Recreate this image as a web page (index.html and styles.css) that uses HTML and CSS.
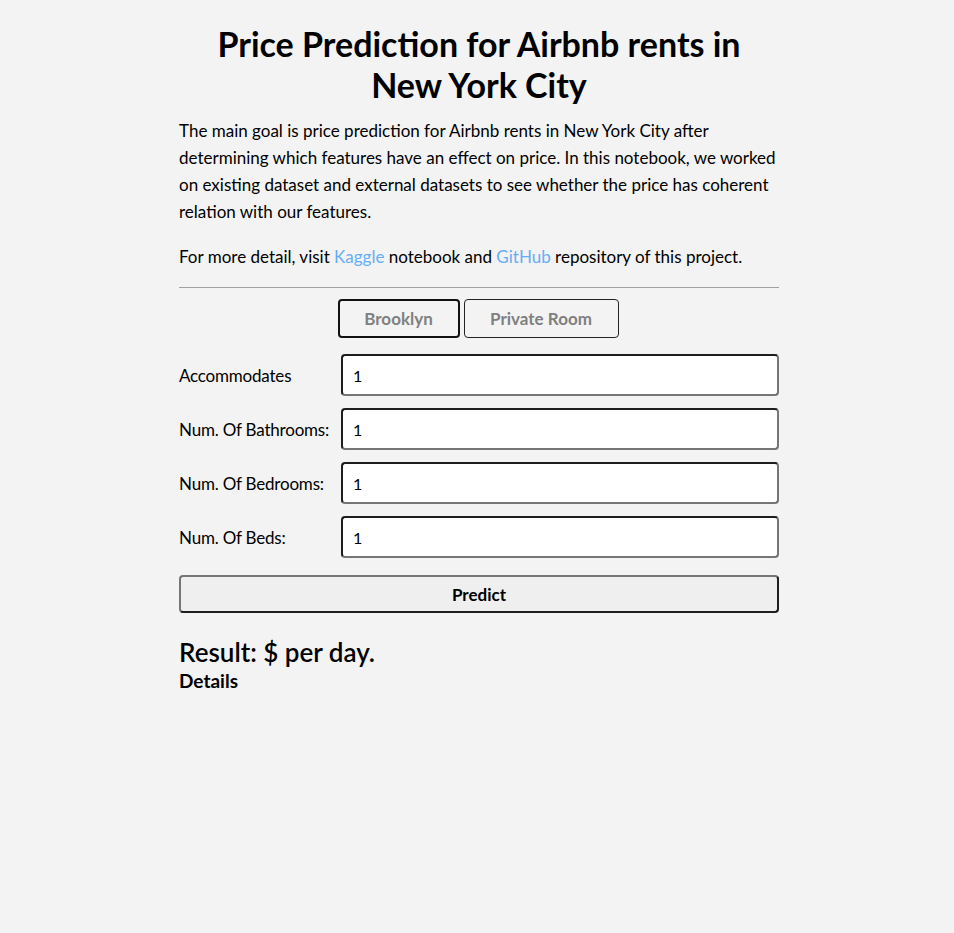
FILE: index.html
```html
<!DOCTYPE html>
<html lang="en">
<head>
<meta charset="utf-8">
<title>Price Prediction for Airbnb rents in New York City</title>
<link rel="stylesheet" href="styles.css">
</head>
<body>
<main class="page">
  <h1 class="title">Price Prediction for Airbnb rents in New York City</h1>
  <p class="text">The main goal is price prediction for Airbnb rents in New York City after determining which features have an effect on price. In this notebook, we worked on existing dataset and external datasets to see whether the price has coherent relation with our features.</p>
  <p class="text">For more detail, visit <a class="link" href="#">Kaggle</a> notebook and <a class="link" href="#">GitHub</a> repository of this project.</p>
  <hr class="rule">
  <div class="choices">
    <button class="choice choice-active">Brooklyn</button>
    <button class="choice choice-room">Private Room</button>
  </div>
  <form class="form">
    <div class="row"><label class="label">Accommodates</label><input class="field" value="1"></div>
    <div class="row"><label class="label">Num. Of Bathrooms:</label><input class="field" value="1"></div>
    <div class="row"><label class="label">Num. Of Bedrooms:</label><input class="field" value="1"></div>
    <div class="row"><label class="label">Num. Of Beds:</label><input class="field" value="1"></div>
    <button class="predict" type="button">Predict</button>
  </form>
  <h2 class="result">Result: $ per day.</h2>
  <h3 class="details">Details</h3>
</main>
</body>
</html>
```
FILE: styles.css
```css
html, body {
  margin: 0;
  padding: 0;
  background: #f3f3f3;
}
body {
  font-family: "Source Sans Pro", Lato, "Liberation Sans", sans-serif;
  color: #000;
}
.page {
  width: 600px;
  margin: 0 auto;
  padding-top: 23px;
  position: relative;
  left: 2px;
}
.title {
  margin: 0;
  text-align: center;
  font-size: 34px;
  line-height: 41px;
  font-weight: 700;
}
.text {
  margin: 12px 0 18px;
  font-size: 17px;
  line-height: 27px;
}
.text + .text { margin-top: 18px; margin-bottom: 17px; }
.link {
  color: #66aef7;
  text-decoration: none;
}
.rule {
  border: 0;
  border-top: 1px solid #a0a0a0;
  margin: 0 0 11px;
}
.choices {
  display: flex;
  justify-content: center;
  gap: 4px;
  margin-left: -2px;
}
.choice {
  font-family: inherit;
  font-size: 17px;
  font-weight: 700;
  color: #808080;
  background: #f3f3f3;
  border: 1px solid #222;
  border-radius: 4px;
  height: 39px;
  padding: 0;
  box-sizing: border-box;
}
.choice-active {
  border: 2px solid #111;
  width: 122px;
}
.choice-room {
  width: 155px;
}
.form {
  margin-top: 16px;
  display: flex;
  flex-direction: column;
  gap: 12px;
}
.row {
  display: flex;
  align-items: center;
}
.label {
  width: 162px;
  flex: none;
  font-size: 17px;
  letter-spacing: -0.2px;
}
.field {
  flex: 1;
  height: 42px;
  box-sizing: border-box;
  border: 2px solid;
  border-color: #1e1e1e #767676 #767676 #1e1e1e;
  border-radius: 4px;
  background: #fff;
  padding: 0 10px;
  font-family: inherit;
  font-size: 16px;
  color: #000;
}
.predict {
  margin-top: 5px;
  height: 38px;
  box-sizing: border-box;
  border: 2px solid;
  border-color: #767676 #1e1e1e #1e1e1e #767676;
  border-radius: 4px;
  background: #efefef;
  font-family: inherit;
  font-size: 17px;
  font-weight: 700;
  color: #000;
}
.result {
  margin: 22px 0 0;
  font-size: 26px;
  line-height: 34px;
  font-weight: 600;
}
.details {
  margin: 0;
  font-size: 19px;
  line-height: 24px;
  font-weight: 700;
}
```
